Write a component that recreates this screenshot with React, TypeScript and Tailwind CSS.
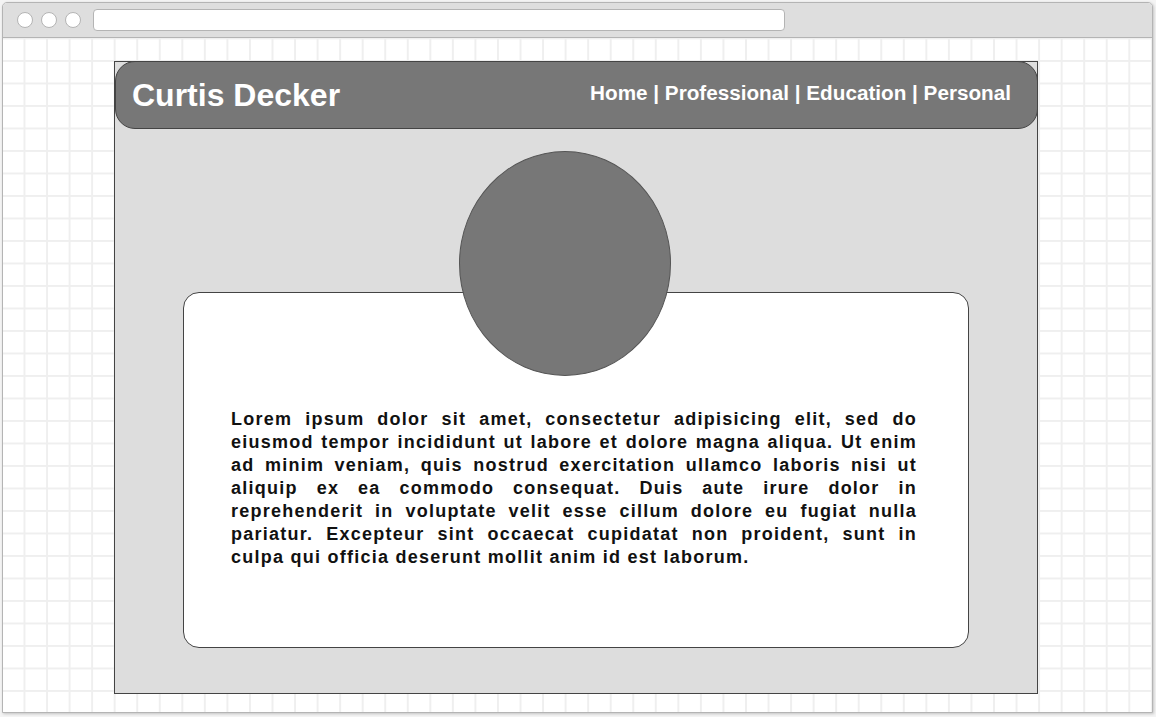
import React from 'react';

const NAV = ['Home', 'Professional', 'Education', 'Personal'];

const BrowserBar: React.FC = () => (
  <div className="flex h-[35px] shrink-0 items-center border-b border-[#b4b4b4] bg-[#dedede] pl-[14px]">
    <div className="flex gap-[8px]">
      {[0, 1, 2].map((i) => (
        <span key={i} className="h-[16px] w-[16px] rounded-full border border-[#b4b4b4] bg-white" />
      ))}
    </div>
    <div className="ml-[12px] h-[22px] w-[692px] rounded-[4px] border border-[#b4b4b4] bg-white" />
  </div>
);

export default function App() {
  return (
    <div
      className="h-[717px] w-[1156px] overflow-hidden bg-[#f4f4f4] pl-[2px] pt-[2px]"
      style={{ fontFamily: '"Liberation Sans", Arial, sans-serif' }}
    >
      <div className="flex h-[711px] w-[1151px] flex-col overflow-hidden rounded-t-[5px] border border-[#b4b4b4] bg-white shadow-[1px_1px_3px_rgba(0,0,0,0.2)]">
        <BrowserBar />

        <div className="flex-1 bg-white bg-[linear-gradient(to_right,#efefef_2px,transparent_2px),linear-gradient(to_bottom,#efefef_2px,transparent_2px)] bg-size-[22.55px_22.5px] bg-position-[20.5px_22px] pl-[111px] pt-[23px]">
          <div className="flex h-[633px] w-[924px] flex-col border border-[#444] bg-[#dddddd]">
            <header className="-mr-px -mt-px flex h-[68px] shrink-0 items-center justify-between rounded-[20px] border border-[#444] bg-[#777777] pl-4 pr-[26px] text-white">
              <h1 className="text-[32px] font-bold leading-none">Curtis Decker</h1>
              <nav className="-mt-[3px] text-[20.7px] font-bold leading-none">
                {NAV.map((item, i) => (
                  <span key={item}>
                    {i > 0 && ' | '}
                    {item}
                  </span>
                ))}
              </nav>
            </header>

            <div className="relative z-10 mb-[-84px] ml-[344px] mt-[22px] h-[225px] w-[212px] shrink-0 rounded-[50%] border border-[#555] bg-[#777777]" />

            <div className="mx-auto h-[356px] w-[786px] rounded-[16px] border border-[#444] bg-white pl-[47px] pr-[51px] pt-[115px]">
              <p className="text-justify text-[18px] font-bold leading-[23px] tracking-[1.25px] text-[#111]">
                Lorem ipsum dolor sit amet, consectetur adipisicing elit, sed do eiusmod tempor incididunt ut labore
                et dolore magna aliqua. Ut enim ad minim veniam, quis nostrud exercitation ullamco laboris nisi ut
                aliquip ex ea commodo consequat. Duis aute irure dolor in reprehenderit in voluptate velit esse cillum
                dolore eu fugiat nulla pariatur. Excepteur sint occaecat cupidatat non proident, sunt in culpa qui
                officia deserunt mollit anim id est laborum.
              </p>
            </div>
          </div>
        </div>
      </div>
    </div>
  );
}
